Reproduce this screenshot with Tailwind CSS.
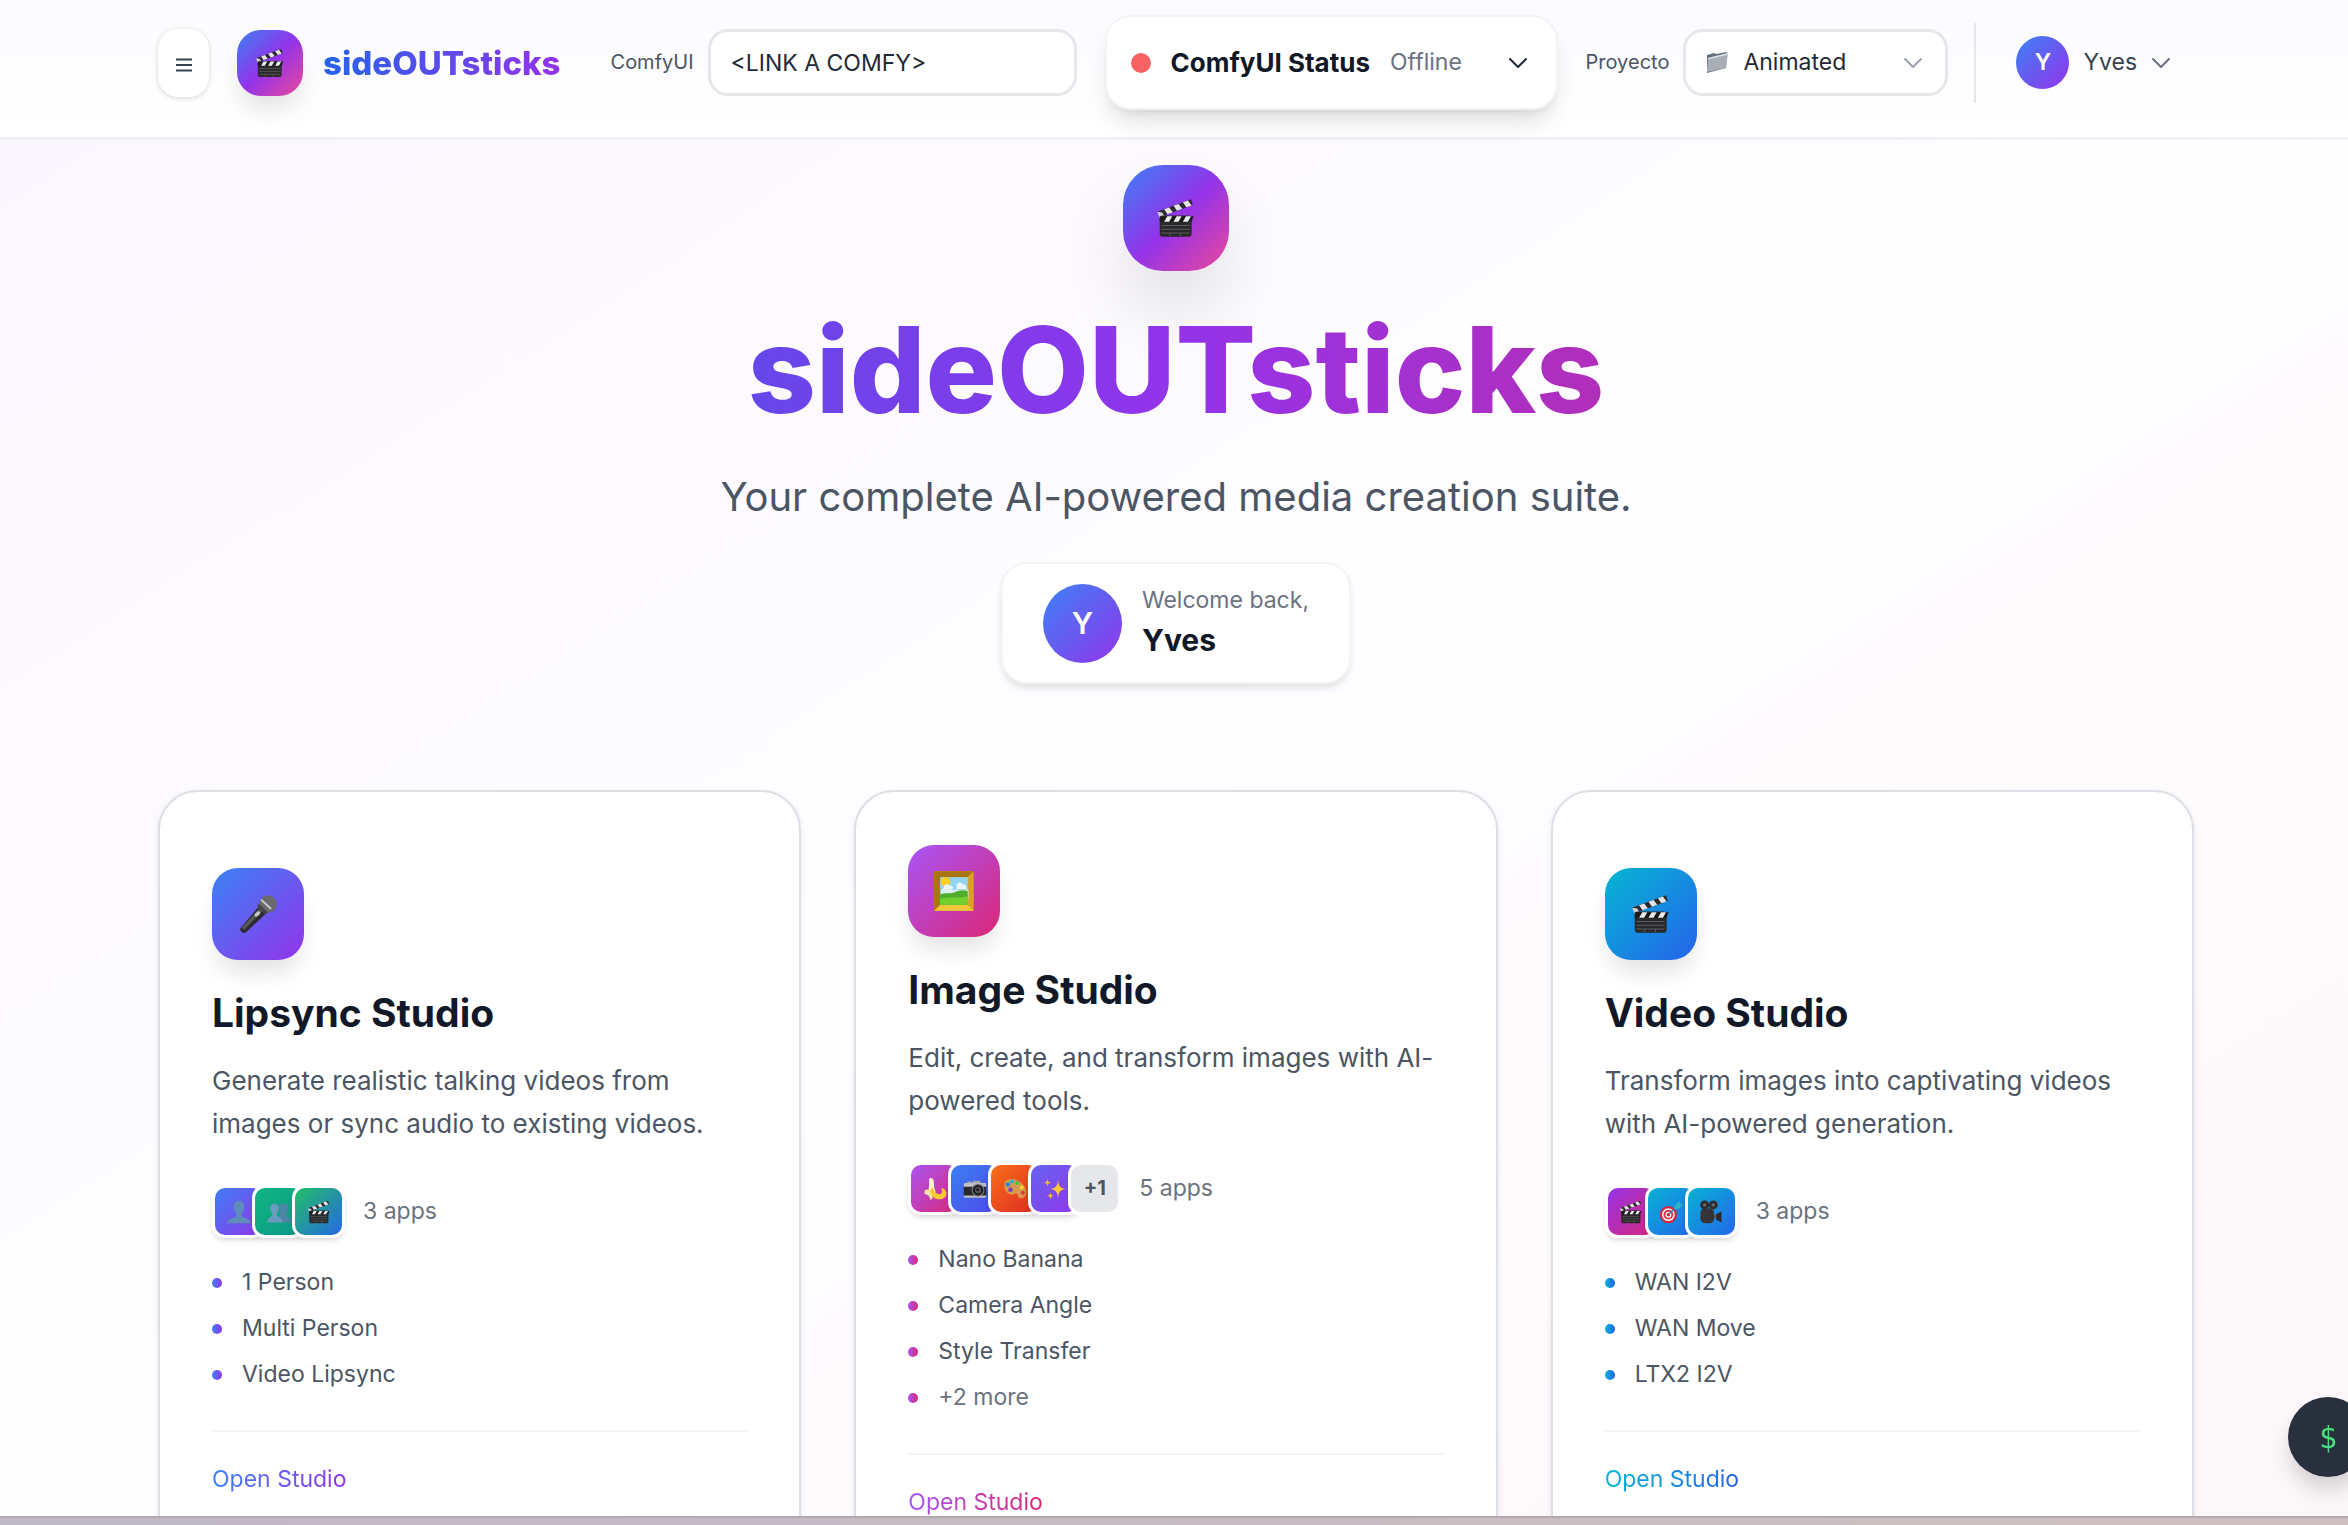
<!DOCTYPE html>
<html lang="es">
<head>
    <meta charset="UTF-8">
    <meta name="viewport" content="width=device-width, initial-scale=1.0">
    <title>sideOUTsticks</title>
    <script src="https://cdn.jsdelivr.net/npm/@tailwindcss/browser@4"></script>
</head>
<body class="h-screen overflow-hidden bg-linear-to-br/srgb from-[#faf6ff] via-[#fefdff] to-[#fdf7fa] font-['Inter',sans-serif] text-[23px] leading-[33px] text-[#4b5563]">

    <!-- Icon sprites -->
    <svg class="hidden" xmlns="http://www.w3.org/2000/svg">
        <symbol id="clapper" viewBox="0 0 32 32">
            <path d="M1 11 28 1l1.400 4.500L5 14.500z" fill="#2b2b2d"/>
            <path d="m6.500 9 4-1.500 3 3.800-4.300 1.600zM14 6.200l4-1.500 3 3.800-4.200 1.600zM21.500 3.400l4-1.500 3 4-4.200 1.500z" fill="#e4e4e6"/>
            <path d="M1 11l4 .5L7.500 16H3z" fill="#d0d0d3"/>
            <rect x="3" y="14" width="25.500" height="17" rx="2.500" fill="#29292b"/>
            <path d="M3 14.500h27L28.500 19H3z" fill="#1b1b1c"/>
            <path d="M9 14.500h4L10.500 19h-4zM16.500 14.500h4L18 19h-4zM24 14.500h4L25.500 19h-4z" fill="#ececee"/>
            <path d="M4.500 22h22.500M4.500 25h22.500M4.500 28h22.500M11 28v2.500M19.500 28v2.500" stroke="#5c5c60" stroke-width="0.800"/>
        </symbol>
        <symbol id="mic" viewBox="0 0 32 32">
            <path d="m17 9.500 6 5.500L6 31c-2 1-5-1.500-4-3.600z" fill="#2c2c2e"/>
            <path d="m17.500 11 2.500 2.300L5 28.500l-2-1.500z" fill="#59595c"/>
            <circle cx="24" cy="8" r="7" fill="#6a6a6c"/>
            <path d="m16.500 7.500 7.500 7.200-2.300 1.500-6.300-6z" fill="#454547"/>
            <path d="m18.500 4.500 8 7.500" stroke="#c8c8ca" stroke-width="1.600"/>
            <ellipse cx="15.500" cy="16" rx="1.500" ry="2.600" transform="rotate(45 15.500 16)" fill="#c7c7ca"/>
        </symbol>
        <symbol id="frame" viewBox="0 0 32 32">
            <rect x="1" y="1" width="30" height="30" rx="1" fill="#d9a520"/>
            <path d="M1 1h30l-5 4.500H5.500zM1 1l4.500 4.500V26L1 31z" fill="#a8750f"/>
            <path d="M1 31h30l-5-4.500H6z" fill="#f0c93a"/>
            <rect x="5.500" y="5.500" width="21" height="21" fill="#8fd6f2"/>
            <circle cx="9.500" cy="9" r="3.600" fill="#fbd022"/>
            <path d="M6 15h21v7H6z" fill="#dceff5"/>
            <path d="M8 13.500c0-3 3.500-3.500 4.500-1.500 2-1 3.500 1 2 3H7zM18 11.500c1-3 4-2 4.500-.5 2-.5 3.500 1.500 3 3.500H18z" fill="#eef3f7"/>
            <path d="M5.500 18.500c5-1.500 8 0 11-1.500s6-2 10-1v10.500h-21z" fill="#4cae2b"/>
            <path d="M5.500 22c7-2 13 0 21-2v6.500h-21z" fill="#72d02e"/>
        </symbol>
        <symbol id="bust" viewBox="0 0 32 32">
            <path d="M16 1c5 0 7 3.500 7 8 0 3-1.500 6.500-3.500 8V21c0 3 11.500 2.500 12.500 10H0c1-7.500 12.500-7 12.500-10v-4C10.500 15.500 9 12 9 9c0-4.500 2-8 7-8z" fill="#5f8db9"/>
        </symbol>
        <symbol id="busts" viewBox="0 0 32 32">
            <path d="M23 5c4 0 5.500 3 5.500 6.500 0 2.500-1 4.500-2.500 6V20c1 2 5 3 6 10H17V5z" fill="#4b86a6"/>
            <path d="M10 5c4 0 5.500 3 5.500 6.500 0 2.500-1 4.500-2.500 6V20c1 3 7 3 8 10H0c1-7 6-7 7-10v-2.500c-1.500-1.500-2.500-3.500-2.500-6C4.500 8 6 5 10 5z" fill="#6b9bc0"/>
        </symbol>
        <symbol id="banana" viewBox="0 0 32 32">
            <path d="M8 3c1-3 5-2 6 1 1 5 0 10 3 16l-8 6C6 18 9 11 8 3z" fill="#fdf3cf"/>
            <path d="M13 14c2 6 5 9 10 9 3-1 3-5 1-8 5-1 8 4 7 9-1 5-8 7-14 5-5-2-8-7-8-11z" fill="#f7cb2d"/>
            <path d="M2 18c3-2 6-2 8 1l3 9-3 3c-1-5-3-8-8-8z" fill="#f5e3a0"/>
        </symbol>
        <symbol id="camera" viewBox="0 0 32 32">
            <path d="M3 9h3V6h5v2l3-3h8l2 3h6v4H3z" fill="#a8aaae"/>
            <rect x="1" y="9" width="30" height="18" rx="2" fill="#29292c"/>
            <path d="M1 10c0-1 1-2 2-2h26c1 0 2 1 2 2v3H1zM1 24.500h30V26c0 1-1 1.500-2 1.500H3c-1 0-2-.5-2-1.500z" fill="#bfc1c5"/>
            <circle cx="20" cy="17.500" r="8.500" fill="#77797d"/>
            <circle cx="20" cy="17.500" r="7" fill="#1b1b1e"/>
            <circle cx="20" cy="17.500" r="4.200" fill="#55575c"/>
            <circle cx="19.500" cy="17" r="2" fill="#1a1a22"/>
        </symbol>
        <symbol id="palette" viewBox="0 0 32 32">
            <path d="M4 5C11-1 26 5 30 16c3 8-3 14-8 12-3-1-1-5-4-6-4-1-5 3-9 1C2 20-1 10 4 5z" fill="#d89a4b"/>
            <circle cx="6.500" cy="10" r="3" fill="#2f7fe0"/>
            <circle cx="12" cy="6" r="2.700" fill="#25b3d6"/>
            <circle cx="19" cy="8" r="2.700" fill="#4bc043"/>
            <circle cx="25" cy="14" r="2.700" fill="#f5d327"/>
            <circle cx="26.500" cy="21" r="2.700" fill="#e8334a"/>
            <circle cx="10" cy="17" r="3" fill="#7e3fc4"/>
        </symbol>
        <symbol id="sparkles" viewBox="0 0 32 32">
            <path d="M20 4c1 9 3 11 11 12-8 1-10 3-11 12-1-9-3-11-11-12 8-1 10-3 11-12z" fill="#fcc934"/>
            <path d="M6 2c.5 4 1.500 5 5 5.500C7.500 8 6.500 9 6 13c-.5-4-1.500-5-5-5.500C4.500 7 5.500 6 6 2zM10 20c.5 3.500 1.500 4.500 5 5-3.500.5-4.500 1.500-5 5-.5-3.500-1.500-4.500-5-5 3.500-.5 4.500-1.500 5-5z" fill="#fbb72b"/>
        </symbol>
        <symbol id="target" viewBox="0 0 32 32">
            <circle cx="12.500" cy="19.500" r="11.500" fill="#d7263a"/>
            <circle cx="12.500" cy="19.500" r="8.500" fill="#f6f6f6"/>
            <circle cx="12.500" cy="19.500" r="6.500" fill="#e23345"/>
            <circle cx="12.500" cy="19.500" r="4" fill="#f6f6f6"/>
            <circle cx="12.500" cy="19.500" r="2.200" fill="#d7263a"/>
            <path d="M13 19 27 6" stroke="#2a7f90" stroke-width="1.600"/>
            <path d="m20 12 2-6 6-5 .5 4 3.500.5-5 6z" fill="#32b3c4"/>
        </symbol>
        <symbol id="moviecam" viewBox="0 0 32 32">
            <circle cx="7.500" cy="6.500" r="6" fill="#2d2d30"/>
            <circle cx="19" cy="6.500" r="6" fill="#2d2d30"/>
            <circle cx="7.500" cy="6.500" r="2.300" fill="#66666a"/>
            <circle cx="19" cy="6.500" r="2.300" fill="#66666a"/>
            <rect x="2" y="11" width="18" height="20" rx="6" fill="#353538"/>
            <path d="M20 20l4-1v6l-4-1z" fill="#58585c"/>
            <path d="M23 19l7-4v15l-7-4z" fill="#29292c"/>
        </symbol>
        <symbol id="folder" viewBox="0 0 24 24">
            <path d="M2 5 9 3l2 1 11-2-1 16L2 23z" fill="#5f6f7b"/>
            <path d="M3 8 23 3l-2 15L2 22z" fill="#a9aeb6"/>
            <path d="M3 8 23 3v1.500L3 9.500z" fill="#dde1e5"/>
        </symbol>
        <symbol id="chevron" viewBox="0 0 20 12">
            <path d="m2 2 8 8 8-8" fill="none" stroke="currentColor" stroke-width="2" stroke-linecap="round" stroke-linejoin="round"/>
        </symbol>
    </svg>

    <header class="flex h-[140px] border-b-[3px] border-[#f1f0f4] bg-linear-to-b/srgb from-[#fbfbff] to-white pl-[158px] pr-[154px]">
        <div class="flex h-[125px] w-full items-center">
            <button aria-label="Menu" class="flex h-[68px] w-[51px] shrink-0 items-center justify-center rounded-[20px] bg-white shadow-[0_1px_5px_rgba(0,0,0,0.16)]">
                <svg class="mt-1 h-[14px] w-4" viewBox="0 0 16 14"><path d="M0 1.500h16M0 7h16M0 12.500h16" stroke="#374151" stroke-width="2"/></svg>
            </button>
            <a href="#" class="ml-7 flex shrink-0 items-center gap-5">
                <span class="flex size-[66px] items-center justify-center rounded-[24px] bg-linear-to-br/srgb from-[#3b82f6] via-[#9333ea] to-[#ec4899] shadow-[0_16px_26px_-5px_rgba(0,0,0,0.12)]">
                    <svg class="size-[30px]"><use href="#clapper"/></svg>
                </span>
                <span class="bg-linear-to-r/srgb from-[#2563eb] to-[#9333ea] bg-clip-text text-[33px] leading-[46px] font-extrabold text-transparent">sideOUTsticks</span>
            </a>
            <div class="ml-[50px] flex min-w-0 items-center gap-[14px]">
                <label for="comfy" class="text-[20px]">ComfyUI</label>
                <input id="comfy" type="text" value="&lt;LINK A COMFY&gt;" class="h-[67px] w-[369px] min-w-0 rounded-[20px] border-[3px] border-[#e5e7eb] bg-white px-5 text-[#1f2937]">
            </div>
            <button class="ml-7 flex h-[95px] w-[453px] shrink-0 items-center rounded-[26px] border-2 border-[#f3f4f6] bg-white px-6 shadow-[0_16px_24px_-5px_rgba(0,0,0,0.12),0_6px_10px_-6px_rgba(0,0,0,0.12)]">
                <span class="mr-5 size-5 rounded-full bg-[#f86262]"></span>
                <span class="text-[26px] font-bold text-[#111827]">ComfyUI Status</span>
                <span class="ml-5 text-[#6b7280]">Offline</span>
                <svg class="mr-1 ml-auto h-3 w-5 text-[#1f2937]"><use href="#chevron"/></svg>
            </button>
            <div class="ml-7 flex shrink-0 items-center gap-[14px]">
                <label for="project" class="text-[20px]">Proyecto</label>
                <div class="relative">
                    <select id="project" class="h-[67px] w-[265px] appearance-none rounded-[20px] border-[3px] border-[#e5e7eb] bg-white pl-[57px] text-[#1f2937]">
                        <option>Animated</option>
                    </select>
                    <svg class="pointer-events-none absolute top-[21px] left-[22px] size-6"><use href="#folder"/></svg>
                    <svg class="pointer-events-none absolute top-7 right-[25px] h-3 w-5 text-[#9ca3af]"><use href="#chevron"/></svg>
                </div>
            </div>
            <button class="ml-[26px] flex h-20 shrink-0 items-center gap-[14px] border-l-2 border-[#e5e7eb] pl-10">
                <span class="flex size-[53px] items-center justify-center rounded-full bg-linear-to-br/srgb from-[#3b82f6] to-[#9333ea] font-semibold text-white">Y</span>
                <span class="text-[#374151]">Yves</span>
                <svg class="h-3 w-5 text-[#6b7280]"><use href="#chevron"/></svg>
            </button>
        </div>
    </header>

    <main class="pr-[154px] pl-[158px]">
        <section class="flex flex-col items-center pt-[25px]">
            <div class="flex size-[106px] items-center justify-center rounded-[40px] bg-linear-to-br/srgb from-[#3b82f6] via-[#9333ea] to-[#ec4899] shadow-[0_40px_80px_-16px_rgba(0,0,0,0.2)]">
                <svg class="size-10"><use href="#clapper"/></svg>
            </div>
            <h1 class="mt-10 w-full bg-linear-to-r/srgb from-[#2563eb] via-[#9333ea] to-[#db2777] bg-clip-text text-center text-[119px] leading-[119px] font-extrabold text-transparent">sideOUTsticks</h1>
            <p class="mt-10 text-[40px] leading-[53px]">Your complete AI-powered media creation suite.</p>
            <div class="mt-[39px] flex h-[122px] items-center gap-5 rounded-[26px] border-2 border-[#f3f4f6] bg-white px-10 shadow-[0_5px_8px_-2px_rgba(0,0,0,0.14)]">
                <div class="flex size-[79px] items-center justify-center rounded-full bg-linear-to-br/srgb from-[#3b82f6] to-[#9333ea] text-[30px] font-semibold text-white">Y</div>
                <div>
                    <p class="text-[#6b7280]">Welcome back,</p>
                    <p class="text-[30px] leading-[46px] font-bold text-[#111827]">Yves</p>
                </div>
            </div>
        </section>

        <section class="mt-[106px] grid grid-cols-3 gap-[53px]">
            <article class="flex flex-col justify-center rounded-[40px] border-2 border-[#dcdfe6] bg-white px-[52px] py-[53px] shadow-[0_2px_6px_rgba(0,0,0,0.08)]">
                <div class="flex size-[92px] items-center justify-center rounded-[26px] bg-linear-to-br/srgb from-[#3b82f6] to-[#9333ea] shadow-[0_16px_24px_-5px_rgba(0,0,0,0.12)]">
                    <svg class="size-10"><use href="#mic"/></svg>
                </div>
                <h2 class="mt-[26px] text-[39px] leading-[53px] font-bold text-[#111827]">Lipsync Studio</h2>
                <p class="mt-5 text-[26px] leading-[43px]">Generate realistic talking videos from images or sync audio to existing videos.</p>
                <div class="mt-10 flex items-center">
                    <div class="flex -space-x-[13px]">
                        <span class="flex size-[53px] items-center justify-center rounded-[13px] border-[3px] border-white bg-linear-to-br/srgb from-[#3b82f6] to-[#9333ea] bg-origin-border shadow-md"><svg class="size-6"><use href="#bust"/></svg></span>
                        <span class="flex size-[53px] items-center justify-center rounded-[13px] border-[3px] border-white bg-linear-to-br/srgb from-[#10b981] to-[#0d9488] bg-origin-border shadow-md"><svg class="size-6"><use href="#busts"/></svg></span>
                        <span class="flex size-[53px] items-center justify-center rounded-[13px] border-[3px] border-white bg-linear-to-br/srgb from-[#22c55e] to-[#2563eb] bg-origin-border shadow-md"><svg class="size-6"><use href="#clapper"/></svg></span>
                    </div>
                    <span class="ml-[18px] text-[#6b7280]">3 apps</span>
                </div>
                <ul class="mt-7 space-y-[13px]">
                    <li class="flex items-center gap-5"><span class="size-[10px] rounded-full bg-linear-to-r/srgb from-[#3b82f6] to-[#9333ea]"></span>1 Person</li>
                    <li class="flex items-center gap-5"><span class="size-[10px] rounded-full bg-linear-to-r/srgb from-[#3b82f6] to-[#9333ea]"></span>Multi Person</li>
                    <li class="flex items-center gap-5"><span class="size-[10px] rounded-full bg-linear-to-r/srgb from-[#3b82f6] to-[#9333ea]"></span>Video Lipsync</li>
                </ul>
                <div class="mt-[39px] flex border-t-2 border-[#f3f4f6] pt-[31px]">
                    <a href="#" class="bg-linear-to-r/srgb from-[#3b82f6] to-[#9333ea] bg-clip-text text-transparent">Open Studio</a>
                </div>
            </article>

            <article class="flex flex-col justify-center rounded-[40px] border-2 border-[#dcdfe6] bg-white px-[52px] py-[53px] shadow-[0_2px_6px_rgba(0,0,0,0.08)]">
                <div class="flex size-[92px] items-center justify-center rounded-[26px] bg-linear-to-br/srgb from-[#a855f7] to-[#db2777] shadow-[0_16px_24px_-5px_rgba(0,0,0,0.12)]">
                    <svg class="size-[42px]"><use href="#frame"/></svg>
                </div>
                <h2 class="mt-[26px] text-[39px] leading-[53px] font-bold text-[#111827]">Image Studio</h2>
                <p class="mt-5 text-[26px] leading-[43px]">Edit, create, and transform images with AI-powered tools.</p>
                <div class="mt-10 flex items-center">
                    <div class="flex -space-x-[13px]">
                        <span class="flex size-[53px] items-center justify-center rounded-[13px] border-[3px] border-white bg-linear-to-br/srgb from-[#a855f7] to-[#db2777] bg-origin-border shadow-md"><svg class="size-6"><use href="#banana"/></svg></span>
                        <span class="flex size-[53px] items-center justify-center rounded-[13px] border-[3px] border-white bg-linear-to-br/srgb from-[#3b82f6] to-[#4f46e5] bg-origin-border shadow-md"><svg class="size-6"><use href="#camera"/></svg></span>
                        <span class="flex size-[53px] items-center justify-center rounded-[13px] border-[3px] border-white bg-linear-to-br/srgb from-[#f97316] to-[#dc2626] bg-origin-border shadow-md"><svg class="size-6"><use href="#palette"/></svg></span>
                        <span class="flex size-[53px] items-center justify-center rounded-[13px] border-[3px] border-white bg-linear-to-br/srgb from-[#6366f1] to-[#9333ea] bg-origin-border shadow-md"><svg class="size-6"><use href="#sparkles"/></svg></span>
                        <span class="flex size-[53px] items-center justify-center rounded-[13px] border-[3px] border-white bg-[#e5e7eb] text-[20px] font-bold">+1</span>
                    </div>
                    <span class="ml-[18px] text-[#6b7280]">5 apps</span>
                </div>
                <ul class="mt-7 space-y-[13px]">
                    <li class="flex items-center gap-5"><span class="size-[10px] rounded-full bg-linear-to-r/srgb from-[#a855f7] to-[#db2777]"></span>Nano Banana</li>
                    <li class="flex items-center gap-5"><span class="size-[10px] rounded-full bg-linear-to-r/srgb from-[#a855f7] to-[#db2777]"></span>Camera Angle</li>
                    <li class="flex items-center gap-5"><span class="size-[10px] rounded-full bg-linear-to-r/srgb from-[#a855f7] to-[#db2777]"></span>Style Transfer</li>
                    <li class="flex items-center gap-5 text-[#6b7280]"><span class="size-[10px] rounded-full bg-linear-to-r/srgb from-[#a855f7] to-[#db2777]"></span>+2 more</li>
                </ul>
                <div class="mt-[39px] flex border-t-2 border-[#f3f4f6] pt-[31px]">
                    <a href="#" class="bg-linear-to-r/srgb from-[#a855f7] to-[#db2777] bg-clip-text text-transparent">Open Studio</a>
                </div>
            </article>

            <article class="flex flex-col justify-center rounded-[40px] border-2 border-[#dcdfe6] bg-white px-[52px] py-[53px] shadow-[0_2px_6px_rgba(0,0,0,0.08)]">
                <div class="flex size-[92px] items-center justify-center rounded-[26px] bg-linear-to-br/srgb from-[#06b6d4] to-[#2563eb] shadow-[0_16px_24px_-5px_rgba(0,0,0,0.12)]">
                    <svg class="size-10"><use href="#clapper"/></svg>
                </div>
                <h2 class="mt-[26px] text-[39px] leading-[53px] font-bold text-[#111827]">Video Studio</h2>
                <p class="mt-5 text-[26px] leading-[43px]">Transform images into captivating videos with AI-powered generation.</p>
                <div class="mt-10 flex items-center">
                    <div class="flex -space-x-[13px]">
                        <span class="flex size-[53px] items-center justify-center rounded-[13px] border-[3px] border-white bg-linear-to-br/srgb from-[#9333ea] to-[#db2777] bg-origin-border shadow-md"><svg class="size-6"><use href="#clapper"/></svg></span>
                        <span class="flex size-[53px] items-center justify-center rounded-[13px] border-[3px] border-white bg-linear-to-br/srgb from-[#06b6d4] to-[#2563eb] bg-origin-border shadow-md"><svg class="size-6"><use href="#target"/></svg></span>
                        <span class="flex size-[53px] items-center justify-center rounded-[13px] border-[3px] border-white bg-linear-to-br/srgb from-[#06b6d4] to-[#2563eb] bg-origin-border shadow-md"><svg class="size-6"><use href="#moviecam"/></svg></span>
                    </div>
                    <span class="ml-[18px] text-[#6b7280]">3 apps</span>
                </div>
                <ul class="mt-7 space-y-[13px]">
                    <li class="flex items-center gap-5"><span class="size-[10px] rounded-full bg-linear-to-r/srgb from-[#06b6d4] to-[#2563eb]"></span>WAN I2V</li>
                    <li class="flex items-center gap-5"><span class="size-[10px] rounded-full bg-linear-to-r/srgb from-[#06b6d4] to-[#2563eb]"></span>WAN Move</li>
                    <li class="flex items-center gap-5"><span class="size-[10px] rounded-full bg-linear-to-r/srgb from-[#06b6d4] to-[#2563eb]"></span>LTX2 I2V</li>
                </ul>
                <div class="mt-[39px] flex border-t-2 border-[#f3f4f6] pt-[31px]">
                    <a href="#" class="bg-linear-to-r/srgb from-[#06b6d4] to-[#2563eb] bg-clip-text text-transparent">Open Studio</a>
                </div>
            </article>
        </section>
    </main>

    <!-- Floating terminal toggle, partly off the right edge -->
    <button aria-label="Terminal" class="fixed -right-5 bottom-12 size-20 rounded-full bg-[#282f3d] font-['DejaVu_Sans_Mono',monospace] text-[30px] text-[#4ade80] shadow-[0_14px_24px_-4px_rgba(0,0,0,0.2)]">$</button>
    <div class="fixed inset-x-0 bottom-0 h-[9px] border-t-2 border-[#b3a9ae] bg-linear-to-r/srgb from-[#bfb8c6] to-[#cfc0c0]"></div>
</body>
</html>
